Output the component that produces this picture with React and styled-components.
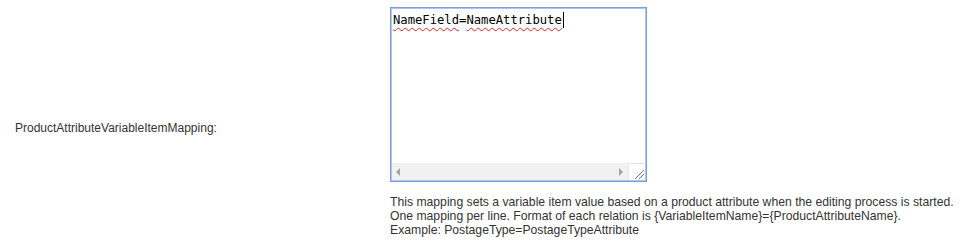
import React from "react";
import styled, { createGlobalStyle } from "styled-components";

const Global = createGlobalStyle`
  html, body { margin: 0; padding: 0; background: #fff; }
  body { font-family: "Liberation Sans", Arial, sans-serif; font-size: 12px; color: #333; }
`;

const Row = styled.div`
  display: grid;
  grid-template-columns: 390px 1fr;
  padding-top: 7px;
`;

const Label = styled.div`
  align-self: center;
  padding-left: 15px;
  padding-top: 12px;
  color: #333;
`;

const Field = styled.div`
  display: flex;
  flex-direction: column;
`;

const TextBox = styled.div`
  box-sizing: border-box;
  width: 257px;
  height: 175px;
  border: 1px solid #7b9edc;
  box-shadow: inset 0 0 0 1px #adc5ef;
  display: flex;
  flex-direction: column;
  background: #fff;
`;

const Content = styled.div`
  flex: 1;
  padding: 4px 3px 0 2px;
  font-family: "DejaVu Sans Mono", "Liberation Mono", monospace;
  font-size: 12.2px;
  line-height: 16px;
  color: #000;
  white-space: pre;
  display: flex;
  align-items: flex-start;
`;

const Misspelled = styled.span`
  text-decoration: underline wavy #e02020;
  text-decoration-thickness: 1px;
  text-underline-offset: 3px;
  text-decoration-skip-ink: none;
`;

const Caret = styled.span`
  display: inline-block;
  width: 1px;
  height: 16px;
  background: #000;
  margin-left: 1px;
`;

const ScrollBar = styled.div`
  display: flex;
  height: 17px;
  margin: 0 1px 1px 1px;
`;

const Track = styled.div`
  flex: 1;
  background: #f1f1f1;
  display: flex;
  align-items: center;
  justify-content: space-between;
  padding: 0 5px 0 4px;
`;

const Arrow = styled.span`
  width: 0;
  height: 0;
  border-top: 4px solid transparent;
  border-bottom: 4px solid transparent;
  ${(p) =>
    p.dir === "left"
      ? "border-right: 4px solid #a3a3a3;"
      : "border-left: 4px solid #a3a3a3;"}
`;

const Corner = styled.div`
  width: 17px;
  height: 17px;
  background: #fff;
  border-left: 1px solid #e6e6e6;
  border-top: 1px solid #e6e6e6;
  box-sizing: border-box;
  display: flex;
  align-items: flex-end;
  justify-content: flex-end;
`;

const Help = styled.div`
  margin-top: 13px;
  font-size: 12.2px;
  line-height: 14px;
  color: #333;
`;

function Grip() {
  return (
    <svg width="12" height="12" viewBox="0 0 12 12">
      <line x1="2" y1="11" x2="11" y2="2" stroke="#7a7a7a" strokeWidth="1" />
      <line x1="6" y1="11" x2="11" y2="6" stroke="#7a7a7a" strokeWidth="1" />
    </svg>
  );
}

export default function App() {
  return (
    <>
      <Global />
      <Row>
        <Label>ProductAttributeVariableItemMapping:</Label>
        <Field>
          <TextBox>
            <Content>
              <Misspelled>NameField</Misspelled>=<Misspelled>NameAttribute</Misspelled>
              <Caret />
            </Content>
            <ScrollBar>
              <Track>
                <Arrow dir="left" />
                <Arrow dir="right" />
              </Track>
              <Corner>
                <Grip />
              </Corner>
            </ScrollBar>
          </TextBox>
          <Help>
            This mapping sets a variable item value based on a product attribute when the editing process is started.
            <br />
            One mapping per line. Format of each relation is {"{VariableItemName}={ProductAttributeName}"}.
            <br />
            Example: PostageType=PostageTypeAttribute
          </Help>
        </Field>
      </Row>
    </>
  );
}
